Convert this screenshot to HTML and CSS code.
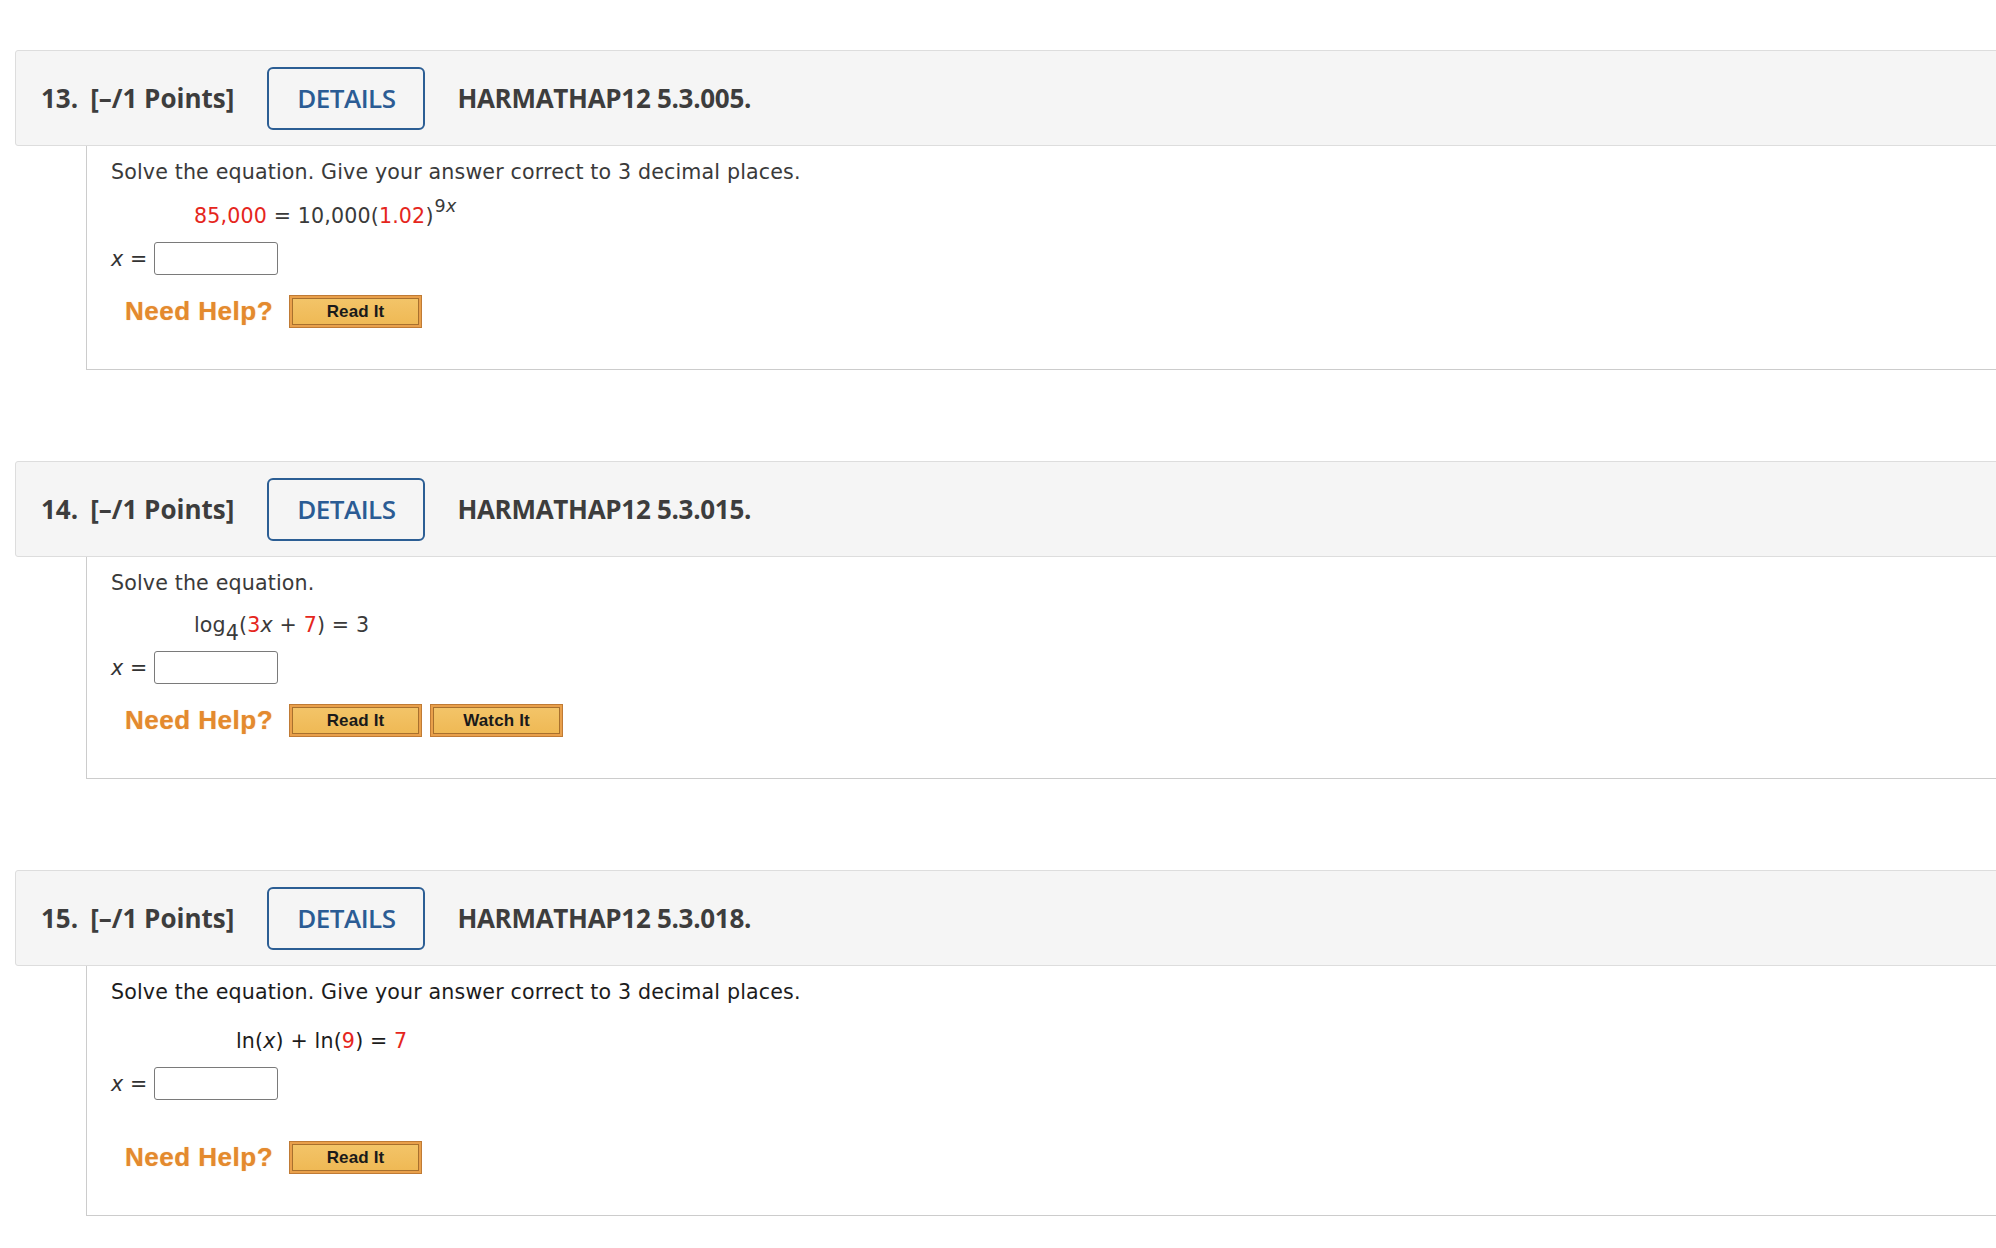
FILE: index.html
```html
<!DOCTYPE html>
<html lang="en">
<head>
<meta charset="utf-8">
<title>Questions</title>
<link rel="stylesheet" href="styles.css">
</head>
<body>
<div class="page">

  <section class="question">
    <div class="q-header">
      <span class="q-num">13.</span>
      <span class="q-points">[&ndash;/1 Points]</span>
      <button class="details">DETAILS</button>
      <span class="q-code">HARMATHAP12 5.3.005.</span>
    </div>
    <div class="q-body">
      <p class="prompt">Solve the equation. Give your answer correct to 3 decimal places.</p>
      <p class="eq eq-13"><span class="red">85,000</span> = 10,000(<span class="red">1.02</span>)<span class="sup">9<i>x</i></span></p>
      <div class="answer"><span class="ans-label"><i>x</i> =</span><input class="ans-input" type="text"></div>
      <div class="help"><span class="need-help">Need Help?</span><span class="help-btn">Read It</span></div>
    </div>
  </section>

  <section class="question">
    <div class="q-header">
      <span class="q-num">14.</span>
      <span class="q-points">[&ndash;/1 Points]</span>
      <button class="details">DETAILS</button>
      <span class="q-code">HARMATHAP12 5.3.015.</span>
    </div>
    <div class="q-body">
      <p class="prompt">Solve the equation.</p>
      <p class="eq eq-14">log<span class="sub">4</span>(<span class="red">3</span><i>x</i> + <span class="red">7</span>) = 3</p>
      <div class="answer"><span class="ans-label"><i>x</i> =</span><input class="ans-input" type="text"></div>
      <div class="help"><span class="need-help">Need Help?</span><span class="help-btn">Read It</span><span class="help-btn">Watch It</span></div>
    </div>
  </section>

  <section class="question">
    <div class="q-header">
      <span class="q-num">15.</span>
      <span class="q-points">[&ndash;/1 Points]</span>
      <button class="details">DETAILS</button>
      <span class="q-code">HARMATHAP12 5.3.018.</span>
    </div>
    <div class="q-body q-body-15">
      <p class="prompt dark">Solve the equation. Give your answer correct to 3 decimal places.</p>
      <p class="eq eq-15 dark">ln(<i>x</i>) + ln(<span class="red">9</span>) = <span class="red">7</span></p>
      <div class="answer answer-15"><span class="ans-label"><i>x</i> =</span><input class="ans-input" type="text"></div>
      <div class="help help-15"><span class="need-help">Need Help?</span><span class="help-btn">Read It</span></div>
    </div>
  </section>

</div>
</body>
</html>
```

FILE: styles.css
```css
html, body {
  margin: 0;
  padding: 0;
  background: #ffffff;
  overflow: hidden;
}

.page {
  padding: 50px 0 0 15px;
  width: 2010px;
}

.question {
  margin-bottom: 91px;
}

.q-header {
  box-sizing: border-box;
  height: 96px;
  display: flex;
  align-items: center;
  padding-left: 25px;
  background: #f5f5f5;
  border: 1px solid #dddddd;
  border-radius: 3px 0 0 3px;
  font-family: "Open Sans", sans-serif;
  font-size: 26px;
  color: #3d3d3d;
}

.q-num {
  font-weight: 700;
  margin-right: 12px;
}

.q-points {
  font-weight: 700;
}

.details {
  box-sizing: border-box;
  width: 158px;
  height: 63px;
  margin: 0 32px 0 33px;
  padding: 0;
  background: transparent;
  border: 2.5px solid #2c5e94;
  border-radius: 6px;
  font-family: "Open Sans", sans-serif;
  font-size: 26px;
  font-weight: 600;
  color: #2b5c94;
  letter-spacing: -0.5px;
}

.q-code {
  font-weight: 700;
  letter-spacing: -0.3px;
}

.q-body {
  margin-left: 71px;
  padding: 14px 0 41px 24px;
  border-left: 1px solid #cccccc;
  border-bottom: 1px solid #cccccc;
  font-family: "DejaVu Sans", Verdana, sans-serif;
  font-size: 20.6px;
  letter-spacing: 0.15px;
  color: #3a3a3a;
}

.prompt {
  margin: 0;
  line-height: 24px;
}

.dark {
  color: #1c1c1c;
}

.eq {
  margin: 20px 0 0 0;
  line-height: 24px;
}

.eq-13 {
  padding-left: 83px;
}

.eq-14 {
  margin-top: 18px;
  padding-left: 83px;
}

.eq-15 {
  margin-top: 25px;
  padding-left: 125px;
}

.red {
  color: #e5261d;
}

.sup {
  font-size: 17.5px;
  line-height: 0;
  vertical-align: 11px;
  margin-left: 1px;
}

.sub {
  font-size: 20.6px;
  line-height: 0;
  vertical-align: -8px;
}

.answer {
  display: flex;
  align-items: center;
  margin-top: 14px;
  height: 33px;
}

.answer-15 {
  margin-top: 14px;
}

.ans-label {
  margin-right: 7px;
  color: #333333;
}

.ans-input {
  box-sizing: border-box;
  width: 124px;
  height: 33px;
  margin: 0;
  border: 1px solid #7a7a7a;
  border-radius: 3px;
  background: #ffffff;
}

.help {
  display: flex;
  align-items: center;
  margin-top: 20px;
  padding-left: 14px;
  height: 33px;
}

.help-15 {
  margin-top: 41px;
}

.need-help {
  font-family: "Liberation Sans", Arial, sans-serif;
  font-weight: 700;
  font-size: 26px;
  letter-spacing: 0.5px;
  color: #e48a2e;
  margin-right: 16px;
  text-shadow: 0 0 1px rgba(228, 138, 46, 0.6);
}

.help-btn {
  box-sizing: border-box;
  display: flex;
  align-items: center;
  justify-content: center;
  width: 127px;
  height: 27px;
  margin: 0 6px 0 0;
  background: linear-gradient(#f3c468, #efb955);
  border: 1px solid #a8702d;
  box-shadow: 0 0 0 2px #e9a04b, 0 0 0 3px #c07b35;
  font-family: "Liberation Sans", Arial, sans-serif;
  font-weight: 700;
  font-size: 17px;
  color: #1a1a1a;
}

.help .need-help + .help-btn {
  margin-left: 3px;
}

.help-btn + .help-btn {
  margin-left: 8px;
}
```
